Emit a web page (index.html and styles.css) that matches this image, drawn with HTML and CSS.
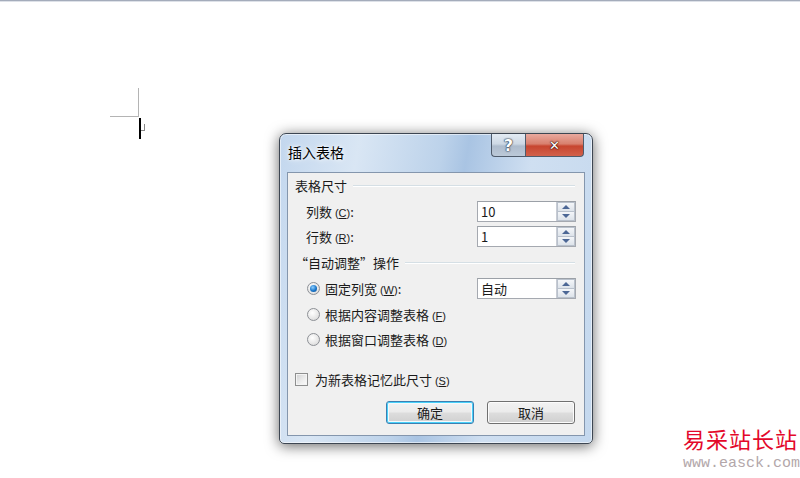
FILE: index.html
```html
<!DOCTYPE html>
<html lang="zh-CN">
<head>
    <meta charset="UTF-8">
    <meta name="viewport" content="width=device-width, initial-scale=1.0">
    <title>插入表格</title>
    <link rel="stylesheet" href="styles.css">
</head>
<body>
    <div class="ruler-bar"></div>

    <div class="page">
        <div class="corner-mark"></div>
        <div class="caret"><span class="caret-hook"></span></div>

        <div class="dialog">
            <div class="titlebar">
                <span class="title">插入表格</span>
                <div class="title-buttons">
                    <div class="tbtn tbtn-help">?</div>
                    <div class="tbtn tbtn-close">✕</div>
                </div>
            </div>

            <div class="client">
                <div class="row group-row">
                    <span class="group-label">表格尺寸</span>
                    <span class="group-line"></span>
                </div>
                <div class="row field-row">
                    <span class="label">列数 <span class="key">(<u>C</u>)</span>:</span>
                    <div class="spinbox">
                        <span class="spin-value">10</span>
                        <div class="spin"><span class="spin-up"></span><span class="spin-down"></span></div>
                    </div>
                </div>
                <div class="row field-row">
                    <span class="label">行数 <span class="key">(<u>R</u>)</span>:</span>
                    <div class="spinbox">
                        <span class="spin-value">1</span>
                        <div class="spin"><span class="spin-up"></span><span class="spin-down"></span></div>
                    </div>
                </div>

                <div class="row group-row">
                    <span class="group-label">“自动调整”操作</span>
                    <span class="group-line"></span>
                </div>
                <div class="row field-row">
                    <label class="option">
                        <span class="radio checked"></span>
                        <span class="option-text">固定列宽 <span class="key">(<u>W</u>)</span>:</span>
                    </label>
                    <div class="spinbox">
                        <span class="spin-value">自动</span>
                        <div class="spin"><span class="spin-up"></span><span class="spin-down"></span></div>
                    </div>
                </div>
                <div class="row field-row">
                    <label class="option">
                        <span class="radio"></span>
                        <span class="option-text">根据内容调整表格 <span class="key">(<u>F</u>)</span></span>
                    </label>
                </div>
                <div class="row field-row">
                    <label class="option">
                        <span class="radio"></span>
                        <span class="option-text">根据窗口调整表格 <span class="key">(<u>D</u>)</span></span>
                    </label>
                </div>

                <div class="row check-row">
                    <label class="option">
                        <span class="checkbox"></span>
                        <span class="option-text">为新表格记忆此尺寸 <span class="key">(<u>S</u>)</span></span>
                    </label>
                </div>

                <div class="buttons">
                    <div class="button default">确定</div>
                    <div class="button">取消</div>
                </div>
            </div>
        </div>

        <div class="watermark">
            <div class="wm-name">易采站长站</div>
            <div class="wm-url">www.easck.com</div>
        </div>
    </div>
</body>
</html>
```

FILE: styles.css
```css
body {
    margin: 0;
    width: 800px;
    height: 478px;
    overflow: hidden;
    background: #fff;
    font-family: "Noto Sans CJK SC", "Noto Sans", sans-serif;
    font-size: 13px;
    color: #1a1a1a;
}

.ruler-bar {
    height: 1px;
    background: #a4acbb;
    border-bottom: 1px solid #dde1e8;
}

.page {
    position: relative;
    height: 476px;
}

/* page corner mark and text caret */
.corner-mark {
    position: absolute;
    left: 110px;
    top: 86px;
    width: 28px;
    height: 28px;
    border-right: 1px solid #b4b4b4;
    border-bottom: 1px solid #b4b4b4;
}

.caret {
    position: absolute;
    left: 139px;
    top: 116px;
    width: 2px;
    height: 21px;
    background: #000;
}

.caret-hook {
    position: absolute;
    left: 2px;
    top: 6px;
    width: 3px;
    height: 6px;
    border-right: 1px solid #888;
    border-bottom: 1px solid #888;
}

/* dialog window */
.dialog {
    position: absolute;
    left: 279px;
    top: 131px;
    width: 298px;
    height: 302px;
    padding: 0 7px 7px 7px;
    border: 1px solid #3d4652;
    border-radius: 7px 7px 5px 5px;
    background: linear-gradient(100deg, #c3d7ee 0%, #d9e6f4 22%, #bcd2ea 45%, #a9c4e3 52%, #cfdff1 70%, #c4d8ee 100%);
    box-shadow: 0 2px 14px rgba(0, 0, 0, 0.6), inset 0 0 0 1px rgba(255, 255, 255, 0.55);
    display: flex;
    flex-direction: column;
}

.titlebar {
    height: 38px;
    flex: none;
    display: flex;
    align-items: flex-start;
    justify-content: space-between;
}

.title {
    margin: 8px 0 0 1px;
    font-size: 14px;
    color: #000;
    text-shadow: 0 0 6px #fff, 0 0 3px #fff;
}

.title-buttons {
    display: flex;
    margin-right: 1px;
}

.tbtn {
    height: 22px;
    border: 1px solid #4f5b6b;
    border-top: none;
    display: flex;
    align-items: center;
    justify-content: center;
    font-family: "DejaVu Sans", sans-serif;
    font-weight: bold;
    color: #fff;
}

.tbtn-help {
    width: 33px;
    border-radius: 0 0 0 4px;
    border-right: none;
    background: linear-gradient(#e3ebf3 0%, #cdd8e4 45%, #aebccd 55%, #bcc9d8 100%);
    font-size: 16px;
    color: #fff;
    text-shadow: 0 0 1px #2c3a4c, 0 0 1px #2c3a4c, 0 0 2px #2c3a4c;
}

.tbtn-close {
    width: 57px;
    border-radius: 0 0 4px 0;
    background: linear-gradient(#e9a99e 0%, #d8806e 45%, #c7452f 55%, #d2614b 100%);
    font-size: 13px;
    text-shadow: 0 0 1px #3b0d06, 0 0 1px #3b0d06, 0 0 2px #3b0d06;
}

/* client area */
.client {
    flex: 1;
    border: 1px solid #8496ad;
    background: #f0f0f0;
    padding: 0 8px 0 7px;
    display: flex;
    flex-direction: column;
}

.row {
    flex: none;
    display: flex;
    align-items: center;
    justify-content: space-between;
}

.group-row {
    height: 26.5px;
}

.group-row:first-child {
    height: 25.5px;
}

.field-row {
    height: 25.5px;
}

.group-label {
    white-space: nowrap;
}

.group-line {
    flex: 1;
    height: 0;
    margin: 1px 1px 0 6px;
    border-top: 1px solid #d5dfe5;
    border-bottom: 1px solid #fff;
}

.label {
    padding-left: 11px;
    white-space: nowrap;
}

.key {
    font-family: "Liberation Sans", sans-serif;
    font-size: 11px;
}

.option {
    display: flex;
    align-items: center;
    gap: 5px;
    padding-left: 12px;
}

.option-text {
    white-space: nowrap;
}

.check-row {
    height: 26px;
    margin-top: 14px;
}

.check-row .option {
    padding-left: 0;
    gap: 7px;
}

/* spin box */
.spinbox {
    flex: none;
    width: 97px;
    height: 19px;
    border: 1px solid #a5a9b0;
    border-top-color: #9ba0a7;
    background: #fff;
    display: flex;
    align-items: center;
    justify-content: space-between;
}

.spin-value {
    flex: 1;
    padding-left: 3px;
    font-size: 13px;
    white-space: nowrap;
}

.spin {
    flex: none;
    width: 18px;
    height: 19px;
    display: flex;
    flex-direction: column;
    border-left: 1px solid #c8ccd4;
}

.spin-up,
.spin-down {
    flex: 1;
    display: flex;
    align-items: center;
    justify-content: center;
    background: linear-gradient(#f4f6f9, #dde3ea);
    border: 1px solid #b9c1cc;
}

.spin-up {
    border-bottom: none;
}

.spin-up::before {
    content: "";
    border-left: 4px solid transparent;
    border-right: 4px solid transparent;
    border-bottom: 4px solid #4c6795;
}

.spin-down::before {
    content: "";
    border-left: 4px solid transparent;
    border-right: 4px solid transparent;
    border-top: 4px solid #4c6795;
}

/* radio and checkbox */
.radio {
    flex: none;
    width: 11px;
    height: 11px;
    border: 1px solid #8d9096;
    border-radius: 50%;
    background: radial-gradient(circle at 40% 35%, #fff 0%, #e6e6e6 60%, #d0d0d0 100%);
    display: flex;
    align-items: center;
    justify-content: center;
}

.radio.checked::before {
    content: "";
    width: 7px;
    height: 7px;
    border-radius: 50%;
    background: radial-gradient(circle at 40% 35%, #8fd0ff 0%, #1a75c9 55%, #0b4d8f 100%);
}

.checkbox {
    flex: none;
    width: 11px;
    height: 11px;
    border: 1px solid #8e8f8f;
    background: linear-gradient(135deg, #cfd0d1 0%, #eeeeee 60%, #fbfbfb 100%);
    box-shadow: inset 0 0 0 1px #f4f4f4;
}

/* dialog buttons */
.buttons {
    flex: none;
    display: flex;
    justify-content: flex-end;
    gap: 13px;
    margin-top: 8px;
    padding-right: 1px;
}

.button {
    width: 86px;
    height: 21px;
    border: 1px solid #707070;
    border-radius: 3px;
    background: linear-gradient(#f2f2f2 0%, #ebebeb 48%, #dddddd 52%, #cfcfcf 100%);
    box-shadow: inset 0 0 0 1px #fcfcfc;
    display: flex;
    align-items: center;
    justify-content: center;
    font-size: 13px;
}

.button.default {
    border-color: #3c7fb1;
    box-shadow: inset 0 0 0 1px #48d1fa, inset 0 0 0 2px #f4f9fc;
}

/* watermark */
.watermark {
    position: absolute;
    left: 683px;
    top: 421px;
    white-space: nowrap;
}

.wm-name {
    font-family: "Noto Sans CJK SC", sans-serif;
    font-size: 22px;
    letter-spacing: 1px;
    line-height: 30px;
    color: #e3082a;
}

.wm-url {
    font-family: "Liberation Mono", monospace;
    font-size: 15px;
    line-height: 18px;
    color: #b3a7aa;
    margin-top: 2px;
}
```
